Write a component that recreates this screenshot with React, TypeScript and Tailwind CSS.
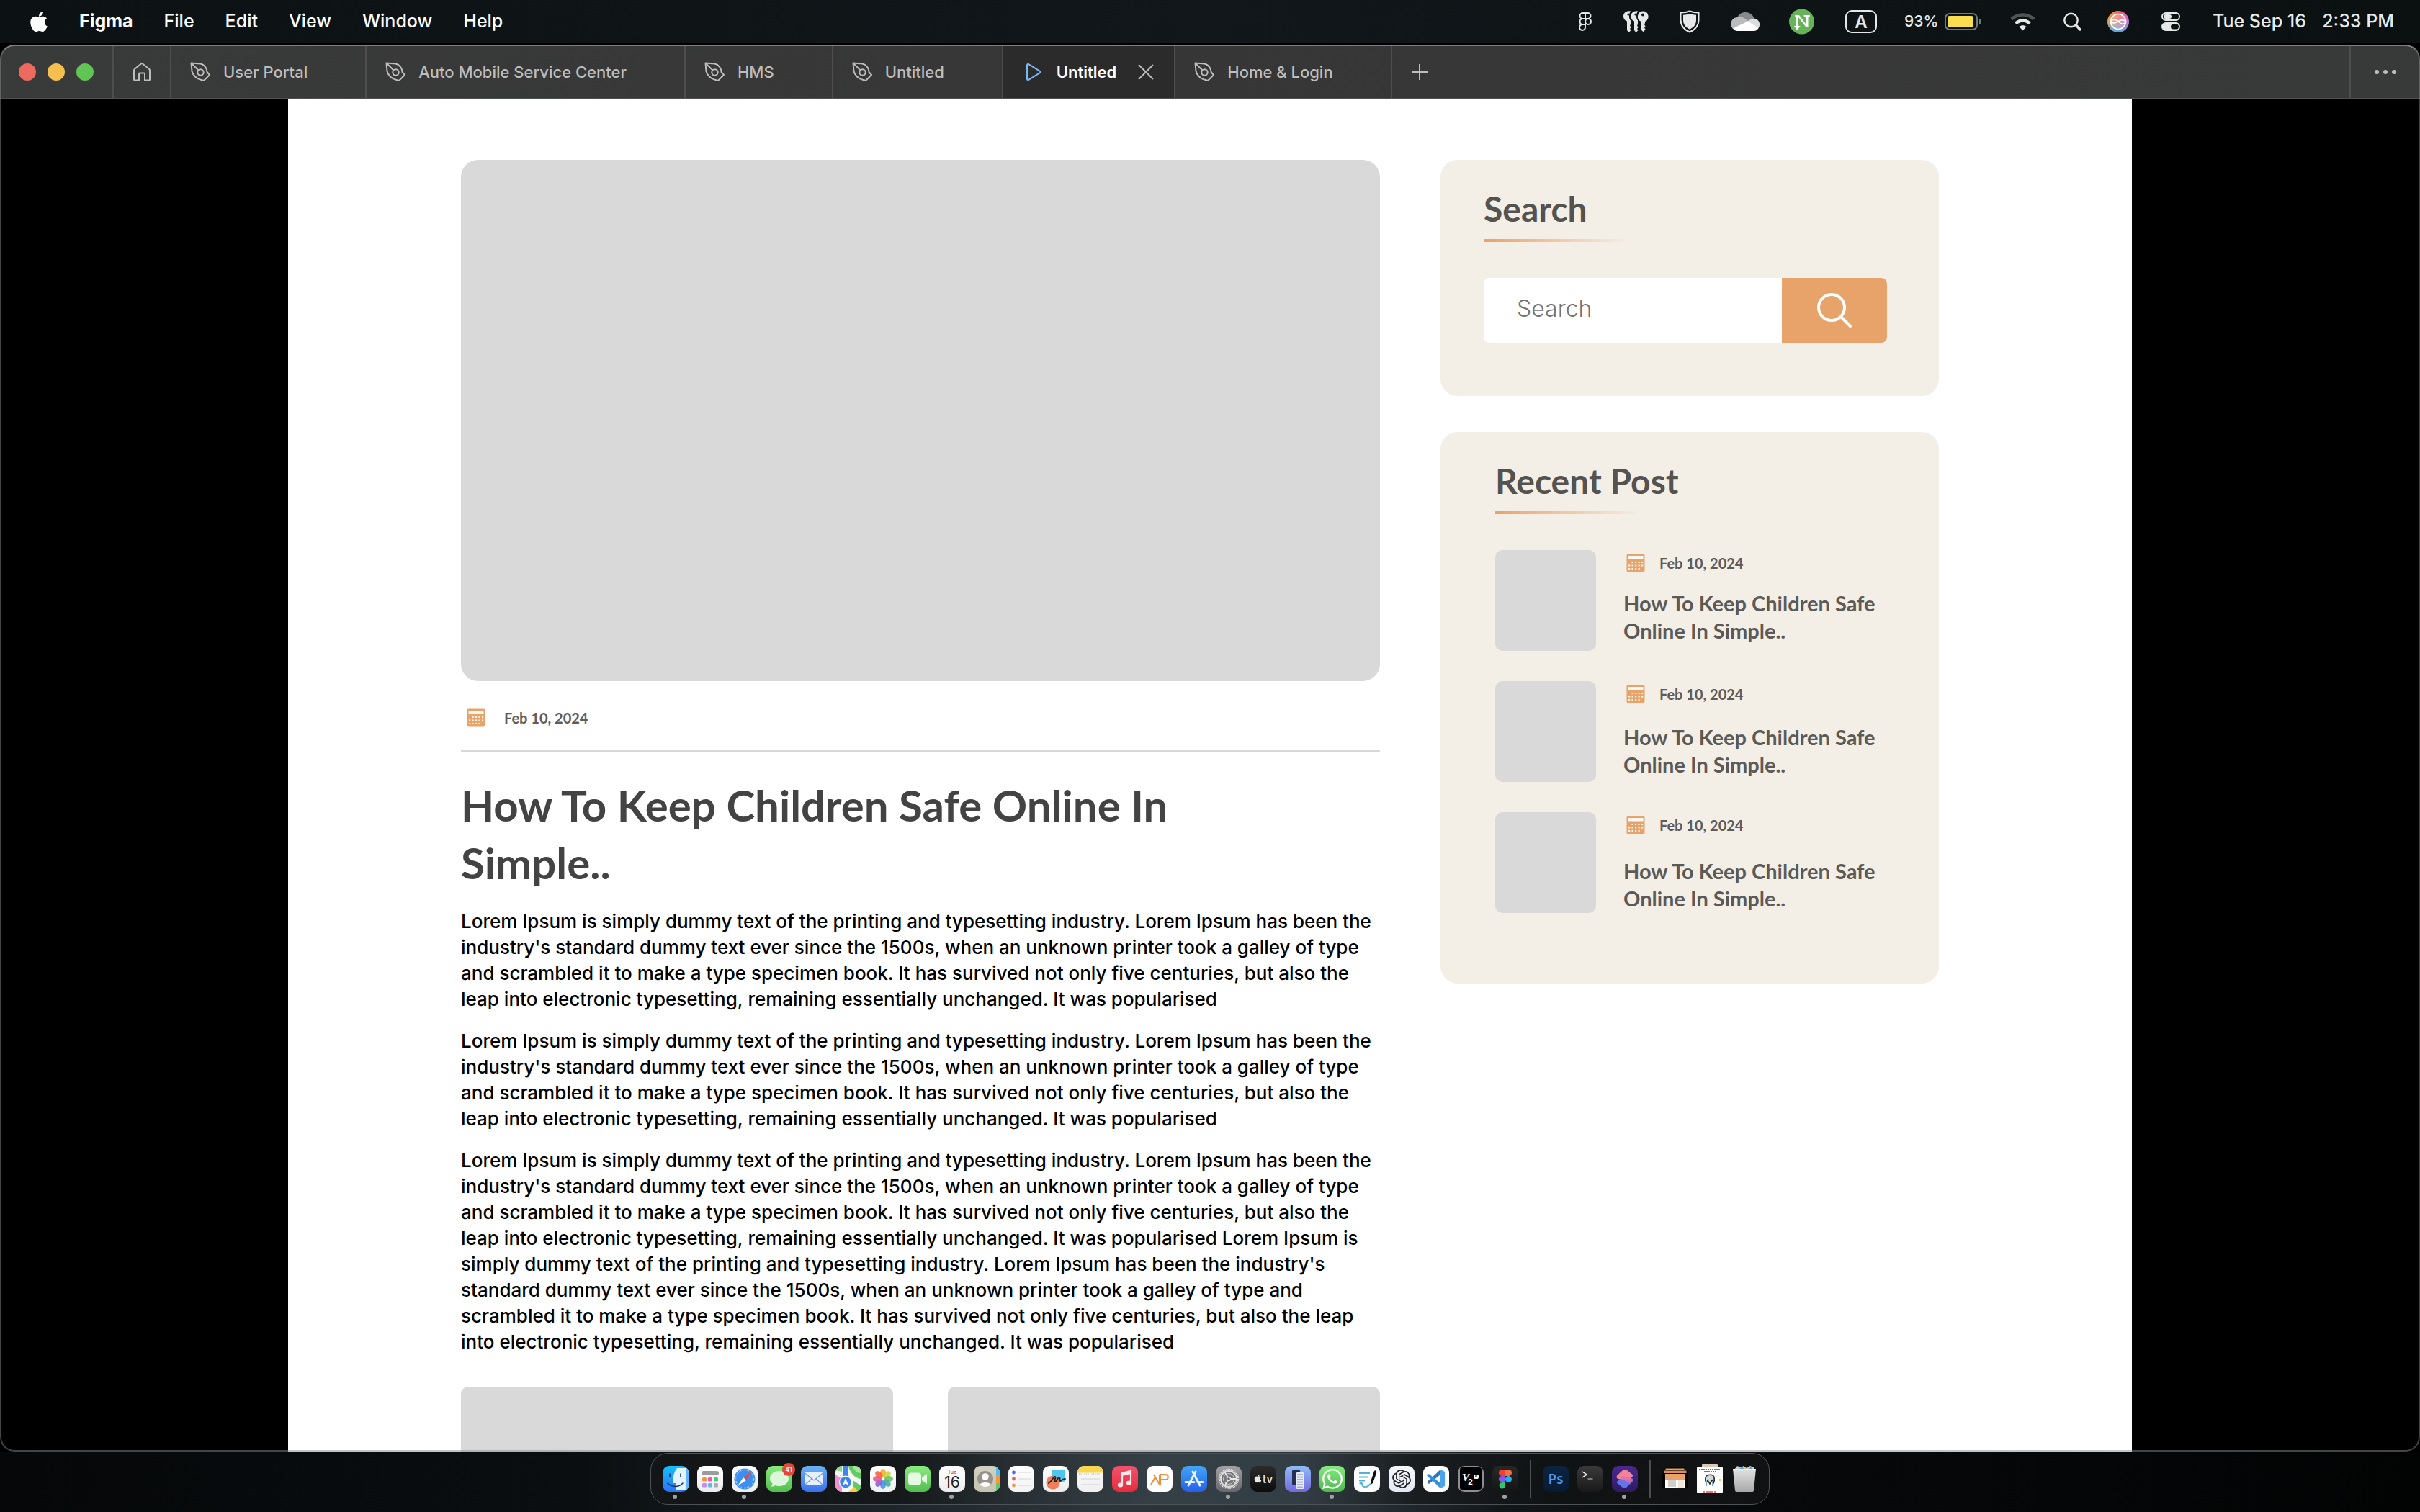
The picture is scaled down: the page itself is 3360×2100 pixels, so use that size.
import type { ReactNode } from "react";
import { FaApple, FaWhatsapp } from "react-icons/fa";
import { SiOpenai } from "react-icons/si";

const MENUS = ["File", "Edit", "View", "Window", "Help"];

const TABS = [
  { name: "User Portal", active: false },
  { name: "Auto Mobile Service Center", active: false },
  { name: "HMS", active: false },
  { name: "Untitled", active: false },
  { name: "Untitled", active: true },
  { name: "Home & Login", active: false },
];

const SHORT_PARAGRAPH =
  "Lorem Ipsum is simply dummy text of the printing and typesetting industry. Lorem Ipsum has been the industry's standard dummy text ever since the 1500s, when an unknown printer took a galley of type and scrambled it to make a type specimen book. It has survived not only five centuries, but also the leap into electronic typesetting, remaining essentially unchanged. It was popularised";

const PARAGRAPHS = [SHORT_PARAGRAPH, SHORT_PARAGRAPH, `${SHORT_PARAGRAPH} ${SHORT_PARAGRAPH}`];

const POSTS = [
  { date: "Feb 10, 2024", title: "How To Keep Children Safe Online In Simple..", spacing: "mt-5" },
  { date: "Feb 10, 2024", title: "How To Keep Children Safe Online In Simple..", spacing: "mt-6" },
  { date: "Feb 10, 2024", title: "How To Keep Children Safe Online In Simple..", spacing: "mt-7" },
];

/* ---------- menu bar ---------- */

function StatusIcons() {
  return (
    <div className="flex items-center gap-9 text-[#e6e8e8]">
      <svg className="h-[28px] w-[32px]" viewBox="0 0 32 28" fill="none" stroke="currentColor" strokeWidth="2">
        <path d="M16 2h-3.500a4 4 0 0 0 0 8H16zM16 2h3.500a4 4 0 0 1 0 8H16zM16 10h-3.500a4 4 0 0 0 0 8H16zM16 18h-3.500a4 4 0 1 0 3.500 4z" />
        <circle cx="20" cy="14" r="4" />
      </svg>
      <svg className="h-[30px] w-[36px]" viewBox="0 0 36 30" fill="currentColor">
        <path d="M11 0.500C5 -0.500 1 3 1 7.500c0 3.500 2 6 5 7v12.500l2.500 3 3-3-1.500-2 1.500-2-1.500-2.500 1-2v-5c-1.500-1.500-2-3.500-2-6 0-3 .5-5 2-7z" />
        <path d="M21 0.500c-5-1-9.500 2-9.500 7 0 3.500 2 6 4.500 7v12.500l2.500 3 3-3-1.500-2 1.500-2-1.500-2.500 1-2v-5c-1.500-1.500-2-3.500-2-6 0-3 .5-5 2-7z" />
        <path fillRule="evenodd" d="M28 0.500a7.500 7.500 0 0 1 3 14.400v2.100l-1 2 1.500 2.500-1.500 2 1.500 2-2.500 4-3.500-3V14.900A7.500 7.500 0 0 1 28 0.500zm0 3a2 2 0 1 0 0 4 2 2 0 0 0 0-4z" />
        <circle cx="8" cy="5" r="1.600" fill="#0f1416" />
        <circle cx="18" cy="5" r="1.600" fill="#0f1416" />
      </svg>
      <svg className="h-[32px] w-[42px]" viewBox="0 0 42 32">
        <path d="M21 1.500c4 1.500 8 2 12.500 2v10c0 8-4.500 13.500-12.500 17-8-3.500-12.500-9-12.500-17v-10c4.500 0 8.500-.5 12.500-2z" fill="none" stroke="currentColor" strokeWidth="2" />
        <path d="M21 5c3 1.200 6 1.600 9 1.700v7c0 6-3 10-9 13-6-3-9-7-9-13v-7c3-.1 6-.5 9-1.700z" fill="currentColor" />
      </svg>
      <svg className="h-[28px] w-[40px]" viewBox="0 0 40 28">
        <path d="M9 9C11 3 16 1 20 1c6 0 11 3 12.500 9L24 15z" fill="#86898a" />
        <path d="M9 8c5-2 9 0 15 5L3 24C-1 20-1 9 9 8z" fill="#b9bbbc" />
        <path d="M24 13c3-2 6-3.500 8.500-3.200 5 .5 8 4 7.500 9 0 2-1 4-2 5z" fill="#dcdddd" />
        <path d="M3 23.500L24 13l14.500 10c-1.500 2.500-3.500 4-6.500 4H9c-2.500 0-4.500-1.500-6-3.500z" fill="#fff" />
      </svg>
      <svg className="h-[36px] w-[45px]" viewBox="0 0 45 36">
        <circle cx="22.500" cy="18" r="17.500" fill="#66b35a" />
        <path d="M13 9h6l9 12V11.500l-2.500-.9V9H34v1.600l-2.500.9V26h-2.600L18 12v12h2.500L16.300 30 12 24h2.800V11.500L13 10.600z" fill="#fff" />
      </svg>
      <svg className="h-[32px] w-[48px]" viewBox="0 0 48 32">
        <rect x="3" y="1" width="42" height="30" rx="8" fill="none" stroke="currentColor" strokeWidth="2" />
        <text x="24" y="25" textAnchor="middle" fontFamily="Inter, sans-serif" fontSize="24" fontWeight="600" fill="currentColor">A</text>
      </svg>
      <div className="flex w-[108px] items-center justify-between">
        <span className="text-[21px] font-medium">93%</span>
        <svg className="h-[24px] w-[52px]" viewBox="0 0 52 24">
          <rect x="1" y="1" width="44" height="22" rx="6" fill="none" stroke="#70797a" strokeWidth="2" />
          <rect x="4" y="4" width="36" height="16" rx="3" fill="#f9df4f" />
          <path d="M48 8c2 .8 3 2.200 3 4s-1 3.200-3 4z" fill="#70797a" />
        </svg>
      </div>
      <svg className="h-[26px] w-[41px]" viewBox="0 0 41 26" fill="none" strokeWidth="4.500">
        <path d="M5 9.500C14 1.500 27 1.500 36 9.500" stroke="#4f5455" />
        <path d="M10.500 15.500c6-5.500 14-5.500 20 0" stroke="currentColor" />
        <path d="M20.500 25.500l-5-5.500c3-2.500 7-2.500 10 0z" fill="currentColor" />
      </svg>
      <svg className="h-[26px] w-[25px]" viewBox="0 0 25 26" fill="none" stroke="currentColor" strokeLinecap="round">
        <circle cx="10.500" cy="11" r="9.200" strokeWidth="2.400" />
        <path d="M17.500 18l5.500 6" strokeWidth="3.400" />
      </svg>
      <svg className="h-[30px] w-[30px]" viewBox="0 0 30 30">
        <defs>
          <linearGradient id="siri-a" x1="0" y1="0" x2="1" y2="0">
            <stop offset="0" stopColor="#f2a23a" />
            <stop offset=".6" stopColor="#ee6070" />
            <stop offset="1" stopColor="#d868d8" />
          </linearGradient>
          <linearGradient id="siri-b" x1="0" y1="0" x2="0" y2="1">
            <stop offset=".4" stopColor="#58b8f4" stopOpacity="0" />
            <stop offset="1" stopColor="#4aa8f4" />
          </linearGradient>
        </defs>
        <circle cx="15" cy="15" r="15" fill="url(#siri-a)" />
        <circle cx="15" cy="15" r="15" fill="url(#siri-b)" />
        <circle cx="15" cy="15" r="10" fill="#fff" fillOpacity=".25" />
        <g fill="none" stroke="#fff" strokeWidth="1.700">
          <circle cx="15" cy="15" r="10.500" />
          <path d="M4.500 14c5-4 9-1 12 2s6 3 9 0" />
          <path d="M4.500 15.500c4 3 8 1 11-1s6-2.500 10 0" />
        </g>
      </svg>
      <svg className="h-[28px] w-[44px]" viewBox="0 0 44 28">
        <rect x="10" y="2" width="24" height="10" rx="5" fill="none" stroke="currentColor" strokeWidth="2" />
        <rect x="12" y="4" width="11" height="6" rx="3" fill="currentColor" />
        <rect x="9" y="15" width="26" height="12" rx="6" fill="currentColor" />
        <rect x="22" y="17.500" width="11" height="7" rx="3.500" fill="#0d1213" />
      </svg>
    </div>
  );
}

function MenuBar() {
  return (
    <header className="flex h-[60px] shrink-0 items-center justify-between bg-linear-to-r from-[#0c1113] via-[#11171a] to-[#0b1011] pr-9 pl-[41px] text-[25px] text-white">
      <nav aria-label="Application menu" className="flex items-center gap-[43px]">
        <button aria-label="Apple menu">
          <FaApple className="h-[32px] w-[26px]" />
        </button>
        <button className="font-bold">Figma</button>
        {MENUS.map((m) => (
          <button key={m} className="font-medium">
            {m}
          </button>
        ))}
      </nav>
      <div className="flex items-center gap-9">
        <StatusIcons />
        <time className="flex w-[252px] justify-between font-medium whitespace-nowrap text-[#e9ebeb]">
          <span>Tue Sep 16</span>
          <span>2:33 PM</span>
        </time>
      </div>
    </header>
  );
}

/* ---------- tab bar ---------- */

function PenIcon() {
  return (
    <svg className="size-7" viewBox="0 0 28 28" fill="none" stroke="currentColor" strokeWidth="2" strokeLinejoin="round">
      <path d="M1.500 1.500l13 1c6 1.500 9 7 9 11.500l3.500 4-8 8-3.500-1C9 24 3.500 18 2.500 13z" />
      <path d="M2 2l9.500 9.500" />
      <circle cx="14.500" cy="14.500" r="4.200" />
    </svg>
  );
}

function PlayIcon() {
  return (
    <svg className="size-7 text-[#7cb8f5]" viewBox="0 0 28 28" fill="none" stroke="currentColor" strokeWidth="2" strokeLinejoin="round">
      <path d="M5 4.500c0-1.500 1-2 2.200-1.300l15.600 9.600c1 .7 1 1.700 0 2.400L7.200 24.800C6 25.500 5 25 5 23.500z" />
    </svg>
  );
}

function TabBar() {
  return (
    <div className="flex h-[76px] shrink-0 border-b-2 border-[#4f504f] bg-linear-to-r from-[#393b3a] via-[#363636] to-[#383a39] pt-0.5 text-[22px] font-medium text-[#bdbdbd]">
      <div className="flex items-center gap-4 border-r-2 border-[#4d4e4d] pr-[26px] pl-[26px]">
        <button aria-label="Close window" className="size-6 rounded-full bg-[#ed6a5f]" />
        <button aria-label="Minimise window" className="size-6 rounded-full bg-[#f5bf4f]" />
        <button aria-label="Zoom window" className="size-6 rounded-full bg-[#61c555]" />
      </div>
      <button aria-label="Home" className="flex w-[80px] items-center justify-center border-r-2 border-[#4d4e4d]">
        <svg className="h-[28px] w-[26px]" viewBox="0 0 26 28" fill="none" stroke="currentColor" strokeWidth="2" strokeLinejoin="round">
          <path d="M2 12c0-1 .3-1.500 1-2.200L12 2.500c.7-.6 1.300-.6 2 0l9 7.300c.7.700 1 1.200 1 2.200v12.500c0 .6-.4 1-1 1h-6V16.500c0-.6-.4-1-1-1h-6c-.6 0-1 .4-1 1v9H3c-.6 0-1-.4-1-1z" />
        </svg>
      </button>
      <div role="tablist" aria-label="Open files" className="flex">
        {TABS.map((t, i) =>
          t.active ? (
            <div key={i} className="flex items-center border-r-2 border-[#4d4e4d] bg-[#2b2b2b]">
              <button role="tab" aria-selected="true" className="flex items-center gap-[18px] pl-7 font-semibold text-white">
                <PlayIcon />
                {t.name}
              </button>
              <button aria-label="Close tab" className="pr-[28px] pl-[30px]">
                <svg className="size-[22px]" viewBox="0 0 22 22" fill="none" stroke="currentColor" strokeWidth="2">
                  <path d="M1 1l20 20M21 1L1 21" />
                </svg>
              </button>
            </div>
          ) : (
            <button key={i} role="tab" aria-selected="false" className="flex items-center gap-[18px] border-r-2 border-[#4d4e4d] pr-[80px] pl-[26px]">
              <PenIcon />
              {t.name}
            </button>
          ),
        )}
      </div>
      <button aria-label="New tab" className="flex w-[76px] items-center justify-center">
        <svg className="size-[22px]" viewBox="0 0 22 22" fill="none" stroke="currentColor" strokeWidth="2">
          <path d="M11 0v22M0 11h22" />
        </svg>
      </button>
      <button aria-label="More" className="ml-auto flex w-[98px] items-center justify-center border-l-2 border-[#4d4e4d]">
        <svg className="h-[6px] w-[32px]" viewBox="0 0 32 6" fill="currentColor">
          <circle cx="4" cy="3" r="3" />
          <circle cx="16" cy="3" r="3" />
          <circle cx="28" cy="3" r="3" />
        </svg>
      </button>
    </div>
  );
}

/* ---------- page ---------- */

const CALENDAR_DOTS = [
  [7.500, 11], [12, 11], [16.500, 11], [21, 11],
  [3, 15.500], [7.500, 15.500], [12, 15.500], [16.500, 15.500], [21, 15.500],
  [3, 20], [7.500, 20], [12, 20], [16.500, 20],
];

function CalendarIcon() {
  return (
    <svg className="size-[26px] shrink-0" viewBox="0 0 26 26">
      <rect x="0.500" y="0.500" width="25" height="25" rx="2" fill="#e8a36b" />
      <rect x="2.500" y="3" width="21" height="4.500" rx=".5" fill="#fbf8f4" />
      {CALENDAR_DOTS.map(([x, y]) => (
        <rect key={`${x}-${y}`} x={x} y={y} width="2.200" height="2" fill="#fbf8f4" />
      ))}
    </svg>
  );
}

function PostDate({ children }: { children: ReactNode }) {
  return <time className="font-['Lato',sans-serif] text-[20px] leading-7 font-bold text-[#5e5d5b]">{children}</time>;
}

function SidebarHeading({ children }: { children: ReactNode }) {
  return (
    <div>
      <h2 className="font-['Lato',sans-serif] text-[48px] leading-[60px] font-bold text-[#545350]">{children}</h2>
      <div className="mt-3 h-1 w-[200px] bg-linear-to-r from-[#e8a36b] to-[#e8a36b]/0" />
    </div>
  );
}

function Article() {
  return (
    <article>
      <div className="h-[724px] rounded-[24px] bg-[#d9d9d9]" />
      <div className="flex h-[98px] items-center gap-[26px] border-b-2 border-[#d9d9d9] pt-1.5 pl-2">
        <CalendarIcon />
        <PostDate>Feb 10, 2024</PostDate>
      </div>
      <h1 className="mt-[34px] max-w-[1100px] font-['Lato',sans-serif] text-[60px] leading-[80px] font-bold text-[#434343]">
        How To Keep Children Safe Online In Simple..
      </h1>
      <div className="mt-6 flex flex-col gap-[22px] text-[26px] leading-[36px] font-medium text-black">
        {PARAGRAPHS.map((p, i) => (
          <p key={i}>{p}</p>
        ))}
      </div>
      <div className="mt-11 grid grid-cols-2 gap-[76px]">
        <div className="h-[360px] rounded-[10px] bg-[#d9d9d9]" />
        <div className="h-[360px] rounded-[10px] bg-[#d9d9d9]" />
      </div>
    </article>
  );
}

function Sidebar() {
  return (
    <aside className="flex flex-col gap-[50px]">
      <section className="rounded-[24px] bg-[#f3eee6] pt-[38px] pr-[72px] pb-[74px] pl-[60px]">
        <SidebarHeading>
          <label htmlFor="search">Search</label>
        </SidebarHeading>
        <form className="mt-[50px] flex h-[90px] overflow-hidden rounded-lg" onSubmit={(e) => e.preventDefault()}>
          <input
            id="search"
            type="search"
            placeholder="Search"
            className="min-w-0 flex-1 bg-white pb-1 pl-[46px] text-[32px] font-light text-[#747474] outline-none placeholder:text-[#747474]"
          />
          <button aria-label="Submit search" className="flex w-[146px] items-center justify-center bg-[#e8a36b]">
            <svg className="size-[48px]" viewBox="0 0 48 48" fill="none" stroke="#fff" strokeWidth="4" strokeLinecap="round">
              <circle cx="20" cy="20" r="18" />
              <path d="M33 33l13 13" />
            </svg>
          </button>
        </form>
      </section>
      <section className="rounded-[24px] bg-[#f3eee6] pt-[38px] pr-[60px] pb-[98px] pl-[76px]">
        <SidebarHeading>Recent Post</SidebarHeading>
        <ul className="mt-[50px] flex flex-col gap-[42px]">
          {POSTS.map((p, i) => (
            <li key={i} className="flex h-[140px] gap-[38px]">
              <div className="size-[140px] shrink-0 rounded-[10px] bg-[#d9d9d9]" />
              <div>
                <div className="flex h-[35px] items-center gap-5 pl-1">
                  <CalendarIcon />
                  <PostDate>{p.date}</PostDate>
                </div>
                <h3 className={`${p.spacing} font-['Lato',sans-serif] text-[29px] leading-[38px] font-bold text-[#5c5a56]`}>
                  <a href="#post">{p.title}</a>
                </h3>
              </div>
            </li>
          ))}
        </ul>
      </section>
    </aside>
  );
}

/* ---------- dock ---------- */

function Tile({ id, from, to, children }: { id: string; from: string; to: string; children?: ReactNode }) {
  return (
    <svg className="size-9 overflow-visible" viewBox="0 0 36 36">
      <defs>
        <linearGradient id={`tile-${id}`} x1="0" y1="0" x2="0" y2="1">
          <stop offset="0" stopColor={from} />
          <stop offset="1" stopColor={to} />
        </linearGradient>
        <clipPath id={`clip-${id}`}>
          <rect width="36" height="36" rx="9" />
        </clipPath>
      </defs>
      <g clipPath={`url(#clip-${id})`}>
        <rect width="36" height="36" fill={`url(#tile-${id})`} />
        {children}
      </g>
    </svg>
  );
}

const PETALS = ["#f7a824", "#c9d33f", "#6cc05a", "#3fae9c", "#4a8fe0", "#8a5fd0", "#e0558f", "#f2603e"];
const LAUNCHER = ["#f59245", "#ee5aa6", "#45c98a", "#c48af5", "#5cb8f5", "#a8abb0"];

type DockItem = { name: string; running?: boolean; badge?: string; icon: ReactNode };

const APPS: DockItem[] = [
  {
    name: "Finder",
    running: true,
    icon: (
      <Tile id="finder" from="#14c0fb" to="#2d73f5">
        <path d="M20 3h16v31H19c-.5-4-.5-7 0-10h-5C14 15 16 8 20 3z" fill="#e4f2fd" />
        <path d="M33 3h3v31h-3z" fill="#5fb5f8" />
        <path d="M10 11v4M25 11v4" stroke="#15365f" strokeWidth="1.600" strokeLinecap="round" />
        <path d="M7 24c6 6 16 6 21 0" stroke="#15365f" strokeWidth="1.500" fill="none" strokeLinecap="round" />
      </Tile>
    ),
  },
  {
    name: "Launchpad",
    icon: (
      <Tile id="apps" from="#ffffff" to="#ececee">
        <rect x="6" y="7" width="24" height="6" rx="3" fill="#9a9c9e" />
        {LAUNCHER.map((c, i) => (
          <rect key={c} x={7 + (i % 3) * 8} y={i < 3 ? 16 : 24} width="6" height="5.500" rx="1.500" fill={c} />
        ))}
      </Tile>
    ),
  },
  {
    name: "Safari",
    running: true,
    icon: (
      <Tile id="safari" from="#ffffff" to="#eceef0">
        <circle cx="18" cy="18" r="14.500" fill="#3b8ff0" />
        <circle cx="18" cy="18" r="12.500" fill="none" stroke="#d8ebff" strokeWidth="1.500" strokeDasharray=".7 1.500" />
        <path d="M28 8L16 16l4 4z" fill="#ee4a3e" />
        <path d="M8 28l12-8-4-4z" fill="#fff" />
      </Tile>
    ),
  },
  {
    name: "Messages",
    badge: "41",
    icon: (
      <Tile id="messages" from="#86ec7c" to="#54bd4f">
        <path d="M18 7c7.500 0 13 4.500 13 10.500S25.500 28 18 28c-2 0-4-.3-5.500-1-1.500 1-3.500 1.500-6 1.500 1.500-1.500 2-3 2-4C6 22.500 5 20 5 17.500 5 11.500 10.500 7 18 7z" fill="#ddf7da" />
      </Tile>
    ),
  },
  {
    name: "Mail",
    icon: (
      <Tile id="mail" from="#6ab2f5" to="#3a72ee">
        <rect x="5" y="9" width="26" height="18" rx="2" fill="#e6effb" />
        <path d="M5.500 10L18 20l12.500-10M5.500 26.500L15 18M30.500 26.500L21 18" fill="none" stroke="#6d9ce8" strokeWidth="1.200" />
      </Tile>
    ),
  },
  {
    name: "Maps",
    icon: (
      <Tile id="maps" from="#f4f6f2" to="#f4f6f2">
        <path d="M0 0h9v8L0 6z" fill="#8adb84" />
        <path d="M18 0h18v18c-8 0-16-8-18-18z" fill="#63cb63" />
        <path d="M24 0h12v10C30 10 25 6 24 0z" fill="#a6e39e" />
        <path d="M0 12l9 6v18H0z" fill="#ee92cf" />
        <path d="M24 20l12 8v8H26z" fill="#5fc963" />
        <path d="M18 36l8-7 6 7z" fill="#f6cf47" />
        <path d="M10 0h7v18h-7z" fill="#3f86ec" />
        <circle cx="14" cy="22.500" r="9" fill="#fff" />
        <circle cx="14" cy="22.500" r="7.800" fill="#3a86ee" />
        <path d="M14 17l4 10-4-2.500-4 2.500z" fill="#fff" />
      </Tile>
    ),
  },
  {
    name: "Photos",
    icon: (
      <Tile id="photos" from="#ffffff" to="#f0f0f2">
        {PETALS.map((c, i) => (
          <ellipse key={c} cx="18" cy="10" rx="4" ry="6" fill={c} fillOpacity=".88" transform={`rotate(${i * 45} 18 18)`} />
        ))}
        <circle cx="18" cy="18" r="1.500" fill="#fff" />
      </Tile>
    ),
  },
  {
    name: "FaceTime",
    icon: (
      <Tile id="facetime" from="#86ec7c" to="#54bd4f">
        <rect x="5" y="9.500" width="18" height="17" rx="4" fill="#e6fae3" />
        <path d="M24 16l6-4.500c.6-.4 1 0 1 .5v12c0 .6-.4 1-1 .5L24 20z" fill="#e6fae3" />
      </Tile>
    ),
  },
  {
    name: "Calendar",
    running: true,
    icon: (
      <Tile id="calendar" from="#ffffff" to="#ececee">
        <text x="18" y="11" textAnchor="middle" fontFamily="Inter, sans-serif" fontSize="7" fontWeight="600" fill="#eb4b3d">Tue</text>
        <text x="18" y="30" textAnchor="middle" fontFamily="Inter, sans-serif" fontSize="21" fill="#1d1d1f">16</text>
      </Tile>
    ),
  },
  {
    name: "Contacts",
    icon: (
      <Tile id="contacts" from="#d2d1c2" to="#c5c3b2">
        <rect x="31" width="5" height="12" fill="#54bdf3" />
        <rect x="31" y="12" width="5" height="12" fill="#f5973e" />
        <rect x="31" y="24" width="5" height="12" fill="#5ecb68" />
        <circle cx="16" cy="18" r="11" fill="#96948a" />
        <circle cx="16" cy="15" r="4.800" fill="#fff" />
        <path d="M8.500 26c1.500-4 13.500-4 15 0-3.500 4-11.500 4-15 0z" fill="#fff" />
      </Tile>
    ),
  },
  {
    name: "Reminders",
    icon: (
      <Tile id="reminders" from="#ffffff" to="#f2f2f4">
        {["#3d6ff0", "#e2604f", "#ec9850"].map((c, i) => (
          <g key={c}>
            <circle cx="7.500" cy={9 + i * 9} r="2.400" fill={c} />
            <path d={`M14 ${9 + i * 9}h17`} stroke="#d6d6d8" strokeWidth="1" />
          </g>
        ))}
      </Tile>
    ),
  },
  {
    name: "Freeform",
    icon: (
      <Tile id="freeform" from="#ffffff" to="#ebebed">
        <rect x="12" y="5" width="19" height="17" rx="3" fill="#4fc6f0" />
        <circle cx="14" cy="23" r="9.500" fill="#ee6a3e" fillOpacity=".85" />
        <path d="M8 24c4-2 7-10 9-9s-3 8 0 7 4-7 6-6-1 5 1 5 3-3 7-3" fill="none" stroke="#17262c" strokeWidth="1.800" strokeLinecap="round" />
      </Tile>
    ),
  },
  {
    name: "Notes",
    icon: (
      <Tile id="notes" from="#fafafa" to="#efeff0">
        <rect width="36" height="9.500" fill="#fad64d" />
        <path d="M2 11h32" stroke="#a9a9a9" strokeWidth="1" strokeDasharray="1 1.500" />
        <path d="M5 18h26M5 26h26" stroke="#d0d0d2" strokeWidth="1" />
      </Tile>
    ),
  },
  {
    name: "Music",
    icon: (
      <Tile id="music" from="#f2526c" to="#e72c3d">
        <path d="M14 26V10l12-3v15.500" fill="none" stroke="#fde8ea" strokeWidth="2.200" />
        <path d="M14 9l12-3v5l-12 3z" fill="#fde8ea" />
        <ellipse cx="11.500" cy="26.500" rx="3.700" ry="3" fill="#fde8ea" />
        <ellipse cx="23.500" cy="23.500" rx="3.700" ry="3" fill="#fde8ea" />
      </Tile>
    ),
  },
  {
    name: "AP",
    icon: (
      <Tile id="ap" from="#ffffff" to="#ffffff">
        <g fill="none" stroke="#f28b3d" strokeWidth="2">
          <path d="M6 26l6-10 5 8M10 12l8 14M18 12v14M19 26V12h7c5 0 5 7 0 7h-6" />
        </g>
      </Tile>
    ),
  },
  {
    name: "App Store",
    icon: (
      <Tile id="store" from="#42a5f7" to="#2561e8">
        <path d="M20 8L10 27M16 8l10 19M6 22.500h12M23 22.500h7" stroke="#e8f2fe" strokeWidth="3" strokeLinecap="round" fill="none" />
      </Tile>
    ),
  },
  {
    name: "System Settings",
    running: true,
    icon: (
      <Tile id="settings" from="#a1a1a6" to="#67676c">
        <circle cx="18" cy="18" r="13" fill="none" stroke="#e2e2e4" strokeWidth="2.500" strokeDasharray="1.200 1" />
        <circle cx="18" cy="18" r="11" fill="#77777c" stroke="#dededf" strokeWidth="1.800" />
        <circle cx="18" cy="18" r="7.500" fill="none" stroke="#c9c9cc" strokeWidth="1" />
        <path d="M18 18h11M18 18l-5.500-9.500M18 18l-5.500 9.500" stroke="#e6e6e8" strokeWidth="1.800" />
        <circle cx="18" cy="18" r="2.500" fill="#6a6a6f" stroke="#e6e6e8" strokeWidth="1.300" />
      </Tile>
    ),
  },
  {
    name: "TV",
    icon: (
      <Tile id="tv" from="#2b2b2c" to="#0c0c0d">
        <FaApple x="4" y="11" size={13} color="#e9e9ea" />
        <text x="17" y="24" fontFamily="Inter, sans-serif" fontSize="15" fontWeight="500" fill="#e9e9ea">tv</text>
      </Tile>
    ),
  },
  {
    name: "iPhone Mirroring",
    icon: (
      <Tile id="mirror" from="#8fbdf7" to="#7468de">
        <rect x="10" y="5" width="11" height="22" rx="2.500" fill="#252f52" />
        <rect x="15" y="9" width="12" height="23" rx="2.500" fill="#e6edf8" />
        <path d="M18 11v19M21 11v19M24 11v19" stroke="#98a2be" strokeWidth="1.600" strokeDasharray="2 1.500" />
      </Tile>
    ),
  },
  {
    name: "WhatsApp",
    running: true,
    icon: (
      <Tile id="whatsapp" from="#83ec7d" to="#4db951">
        <FaWhatsapp x="2" y="2" size={32} color="#fff" />
      </Tile>
    ),
  },
  {
    name: "Notability",
    icon: (
      <Tile id="goodnotes" from="#ffffff" to="#ffffff">
        <path d="M7 10h15M7 15.500h13M7 20.500h8" stroke="#51b4d4" strokeWidth="2.200" />
        <path d="M8 25c1-2 3-2 3 0s1 5 6 4 4-4 6-4" stroke="#51b4d4" strokeWidth="2" fill="none" />
        <path d="M28 7c2-2 4 0 3 3l-5 14-3 2 0-4z" fill="#0f0f10" />
      </Tile>
    ),
  },
  {
    name: "ChatGPT",
    icon: (
      <Tile id="gpt" from="#f7f8fc" to="#e4e8f4">
        <SiOpenai x="5" y="5" size={26} color="#23252a" />
      </Tile>
    ),
  },
  {
    name: "Visual Studio Code",
    icon: (
      <Tile id="vscode" from="#ffffff" to="#ffffff">
        <path d="M24 5l6 3v20l-6 3z" fill="#4ba4ec" />
        <path d="M24 5v7L8 25l-3-2.500z" fill="#2b77c0" />
        <path d="M24 31v-7L8 11l-3 2.500z" fill="#3a8fdb" />
      </Tile>
    ),
  },
  {
    name: "V2",
    icon: (
      <Tile id="vtwo" from="#8e8e8e" to="#8e8e8e">
        <rect x="3" y="2" width="30" height="31" rx="3" fill="#000" />
        <text x="6" y="21" fontFamily="Liberation Serif, serif" fontSize="15" fontWeight="700" fontStyle="italic" fill="#fff">V</text>
        <text x="14" y="26" fontFamily="Inter, sans-serif" fontSize="11" fontWeight="700" fill="#fff">2</text>
        <rect x="22" y="12" width="7" height="6" rx="2" fill="#fff" />
        <path d="M24 14h3M25.500 14v3" stroke="#000" strokeWidth="1" />
      </Tile>
    ),
  },
  {
    name: "Figma",
    running: true,
    icon: (
      <Tile id="figma" from="#282828" to="#151515">
        <path d="M18 5v9h-4.500a4.500 4.500 0 0 1 0-9z" fill="#ed3f32" />
        <path d="M18 5h4.500a4.500 4.500 0 0 1 0 9H18z" fill="#f36f46" />
        <path d="M18 14v9h-4.500a4.500 4.500 0 0 1 0-9z" fill="#8d50f5" />
        <circle cx="22.500" cy="18.500" r="4.500" fill="#1cb0f6" />
        <path d="M18 23v4a4.200 4.200 0 1 1-4.500-4z" fill="#2fc46f" />
      </Tile>
    ),
  },
];

const RECENT_APPS: DockItem[] = [
  {
    name: "Photoshop",
    icon: (
      <Tile id="ps" from="#0b2442" to="#071b33">
        <text x="18" y="25" textAnchor="middle" fontFamily="Open Sans, sans-serif" fontSize="19" fontWeight="600" fill="#4a9af0">Ps</text>
      </Tile>
    ),
  },
  {
    name: "Terminal",
    icon: (
      <Tile id="terminal" from="#3a3a3b" to="#19191a">
        <path d="M7 8l6 4-6 4" fill="none" stroke="#fff" strokeWidth="1.500" />
        <path d="M14.500 18h7" stroke="#9b9b9b" strokeWidth="1.500" />
      </Tile>
    ),
  },
  {
    name: "Shortcuts",
    running: true,
    icon: (
      <Tile id="shortcuts" from="#4b2a8e" to="#2e1a63">
        <path d="M7 22l4-4 17-1c2 1.500 2 4 0 5.500L20 30c-2 1.200-3 1.200-5 0L8 24.500c-1-.8-1.500-1.700-1-2.500z" fill="#6274e8" />
        <path d="M29 14l-4 5-17-1c-2-1.500-2-4 0-5.500L15 6c2-1.200 4-1.200 6 0l7 5.500c1 .8 1.500 1.700 1 2.500z" fill="#f0849c" />
        <path d="M13 14l11 1 5 5-4 4-12-6z" fill="#ee6aa0" fillOpacity=".75" />
      </Tile>
    ),
  },
];

const STACKS: DockItem[] = [
  {
    name: "Screenshots",
    icon: (
      <svg className="size-9" viewBox="0 0 36 36">
        <rect x="4" y="3" width="27" height="5" rx="1" fill="#e8a36b" stroke="#000" />
        <rect x="2" y="6" width="32" height="5" rx="1" fill="#d88f58" stroke="#000" />
        <rect y="10" width="36" height="21" rx="1" fill="#050505" />
        <rect x="4" y="11" width="28" height="20" fill="#fff" />
        <rect x="4" y="11" width="28" height="8" fill="#e8a36b" />
        <rect x="8" y="20" width="11" height="9" fill="#cfcfcf" />
        <rect x="22" y="20" width="8" height="10" fill="#f0e6da" />
      </svg>
    ),
  },
  {
    name: "Documents",
    icon: (
      <svg className="size-9 overflow-visible" viewBox="0 0 36 36">
        <rect x="7" y="-2" width="22" height="5" rx="1" fill="#d8c9b8" />
        <rect y="1" width="36" height="37" rx="2" fill="#fff" />
        <path d="M3 5h30M10 8h17" stroke="#4a4a4a" strokeWidth="1.400" strokeDasharray="2 1" />
        <path d="M12 16c2-5 11-5 12 0s-1 8-1 8l-2-4-3 5-3-5-2 4s-2-4-1-8z" fill="#cfd8da" stroke="#2a2a2a" strokeWidth="1.500" />
        <path d="M13 21v7M22 21v7" stroke="#69b2cc" strokeWidth="2" />
        <path d="M8 36h20" stroke="#d8524e" strokeWidth="1.600" strokeDasharray="3 1" />
        <rect x="31" y="18" width="2" height="3" fill="#e0cf50" />
      </svg>
    ),
  },
  {
    name: "Trash",
    icon: (
      <svg className="size-9 overflow-visible" viewBox="0 0 36 36">
        <defs>
          <linearGradient id="bin" x1="0" y1="0" x2="0" y2="1">
            <stop offset="0" stopColor="#e2e2e2" />
            <stop offset="1" stopColor="#a9a9a9" />
          </linearGradient>
        </defs>
        <path d="M4 5l4-5 5 2 4-2 4 3 5-3 5 2 2 4z" fill="#c8ccd0" />
        <path d="M11 4l4-3 3 4zM24 5l3-4 3 4z" fill="#4fa8e0" />
        <path d="M16 5l3-2 3 2z" fill="#e8cf4a" />
        <path d="M2 4h32l-3 30c-.2 1.500-1 2-2.500 2h-21C6 36 5.200 35.500 5 34z" fill="url(#bin)" />
        <path d="M2 5h32" stroke="#f4f4f4" strokeWidth="1.500" />
      </svg>
    ),
  },
];

function DockGroup({ items }: { items: DockItem[] }) {
  return (
    <>
      {items.map((item) => (
        <button key={item.name} aria-label={item.name} className="relative size-9">
          {item.icon}
          {item.badge && (
            <span className="absolute -top-1 -right-1 flex size-[18px] items-center justify-center rounded-full bg-[#e5483b] text-[9px] font-medium text-white">
              {item.badge}
            </span>
          )}
          {item.running && <span className="absolute top-10 left-[14px] size-1.5 rounded-full bg-[#9fa2a5]" />}
        </button>
      ))}
    </>
  );
}

function Separator() {
  return <div className="mx-1 h-[52px] w-0.5 bg-[#4b4f51]" />;
}

function Dock() {
  return (
    <footer className="flex h-[84px] shrink-0 items-start justify-center bg-[linear-gradient(90deg,#050708_0%,#0a0e11_24%,#171d21_32%,#2c353b_45%,#2a3238_56%,#12171a_62%,#07090b_72%,#020303_100%)] pt-0.5">
      <div className="flex h-[72px] items-center gap-3 rounded-[24px] border border-[#4d5255] bg-[linear-gradient(90deg,#131516_0%,#15181a_22%,#2a3136_34%,#354046_45%,#333e44_58%,#1a1e21_68%,#101314_80%,#111213_100%)] px-4">
        <DockGroup items={APPS} />
        <Separator />
        <DockGroup items={RECENT_APPS} />
        <Separator />
        <DockGroup items={STACKS} />
      </div>
    </footer>
  );
}

export default function App() {
  return (
    <div className="flex h-screen flex-col bg-black font-['Inter',sans-serif]">
      <MenuBar />
      <div className="relative mt-0.5 flex min-h-0 flex-1 flex-col overflow-hidden rounded-[20px] bg-black">
        <TabBar />
        <div className="grid min-h-0 flex-1 grid-cols-[5fr_32fr_5fr] overflow-hidden">
          <main className="col-start-2 grid min-h-0 grid-cols-[minmax(0,1fr)_692px] items-start gap-[84px] overflow-hidden bg-white pt-[84px] pr-[268px] pl-[240px]">
            <Article />
            <Sidebar />
          </main>
        </div>
        <div className="pointer-events-none absolute inset-0 rounded-[20px] border-2 border-[#8a8a8a]/50 border-t-[#807f80]" />
      </div>
      <Dock />
    </div>
  );
}
